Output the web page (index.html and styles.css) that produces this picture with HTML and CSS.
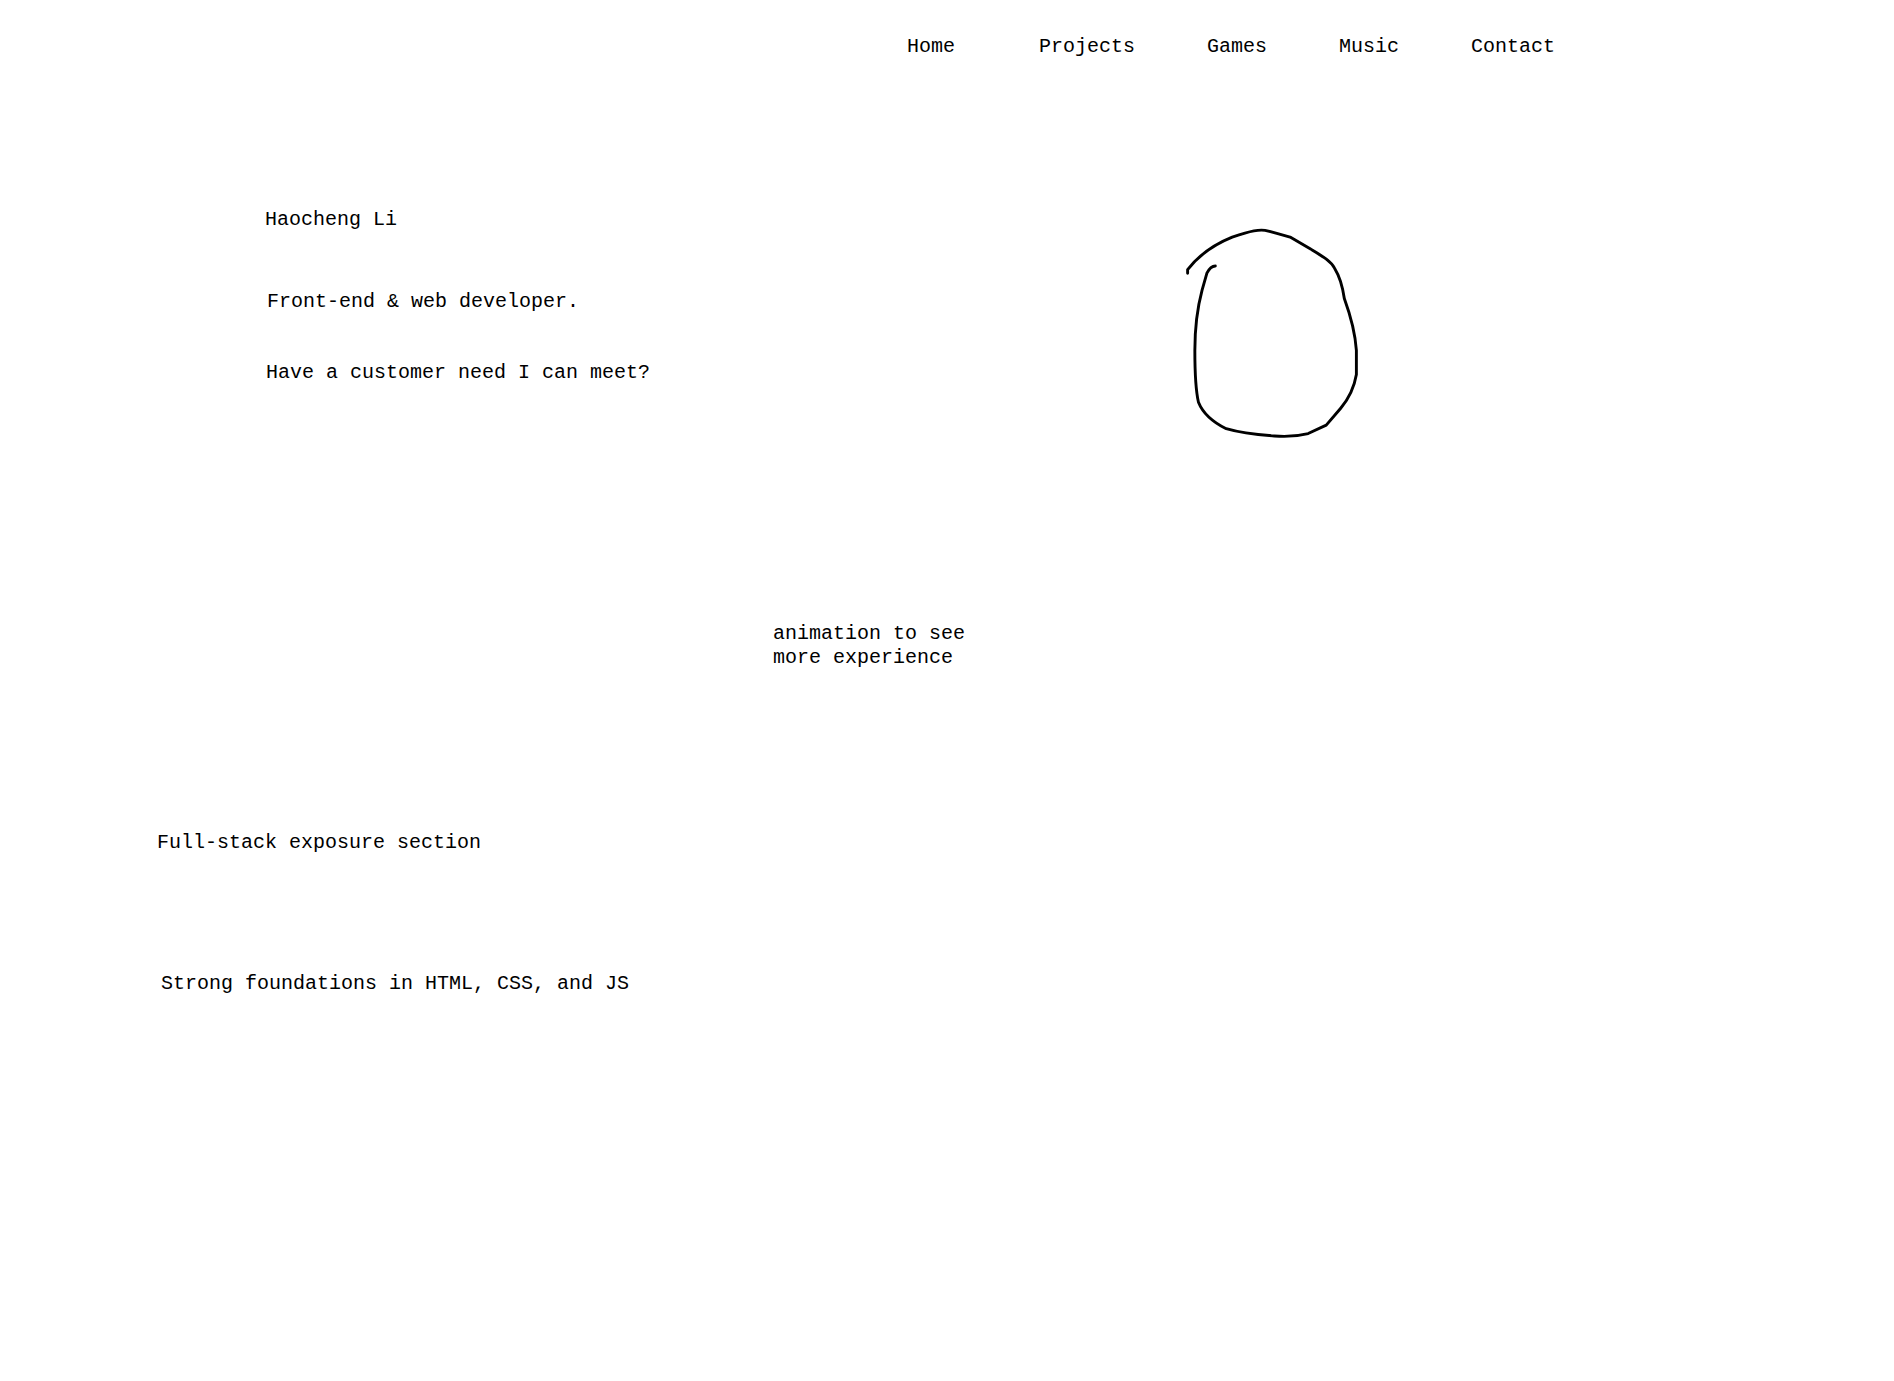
FILE: index.html
```html
<!DOCTYPE html>
<html lang="en">
<head>
<meta charset="utf-8">
<title>Haocheng Li</title>
<link rel="stylesheet" href="styles.css">
</head>
<body>
<header class="site-header">
  <nav class="nav">
    <a class="nav-link nav-home" href="#">Home</a>
    <a class="nav-link" href="#">Projects</a>
    <a class="nav-link" href="#">Games</a>
    <a class="nav-link" href="#">Music</a>
    <a class="nav-link" href="#">Contact</a>
  </nav>
</header>
<main>
  <section class="hero">
    <div class="hero-text">
      <p class="hero-name">Haocheng Li</p>
      <p class="hero-role">Front-end &amp; web developer.</p>
      <p class="hero-cta">Have a customer need I can meet?</p>
    </div>
    <svg class="sketch" viewBox="980 186 146 180" width="176" height="217" aria-hidden="true">
      <path d="M983,226 L983,223 C990,214 1000,204 1020,196 C1035,191 1043,189 1050,191 L1057,193 L1068,196 L1085,206 C1095,212 1102,216 1105,222 C1110,230 1112,240 1113,247 C1117,258 1122,275 1123,290 L1123,310 C1121,322 1115,332 1110,338 L1098,352 L1083,359 C1075,361 1068,362 1055,361 C1040,360 1025,358 1015,355 C1005,350 996,343 992,333 C989,320 989,305 989,290 C989,270 991,255 995,240 L999,226 C1001,222 1004,220 1006,220" fill="none" stroke="#000" stroke-width="2.4" stroke-linecap="round" stroke-linejoin="round"/>
    </svg>
  </section>
  <section class="teaser">
    <p>animation to see<br>more experience</p>
  </section>
  <section class="fullstack">
    <p class="fullstack-title">Full-stack exposure section</p>
    <p class="fullstack-body">Strong foundations in HTML, CSS, and JS</p>
  </section>
</main>
</body>
</html>
```
FILE: styles.css
```css
html, body {
  margin: 0;
  padding: 0;
  background: #fff;
}
body {
  font-family: "Liberation Mono", "DejaVu Sans Mono", monospace;
  font-size: 20px;
  line-height: 24px;
  color: #000;
}
p { margin: 0; }

.site-header {
  padding-top: 35px;
}
.nav {
  display: flex;
  padding-left: 907px;
  gap: 72px;
}
.nav-link {
  color: #000;
  text-decoration: none;
}
.nav-home {
  margin-right: 12px;
}

.hero {
  display: flex;
  align-items: flex-start;
  padding-top: 149px;
  padding-left: 265px;
}
.hero-text {
  width: 919px;
}
.hero-role {
  margin-top: 58px;
  padding-left: 2px;
}
.hero-cta {
  margin-top: 47px;
  padding-left: 1px;
}
.sketch {
  display: block;
  margin-top: 17px;
}

.teaser {
  padding-top: 180px;
  padding-left: 773px;
}

.fullstack {
  padding-top: 161px;
}
.fullstack-title {
  padding-left: 157px;
}
.fullstack-body {
  margin-top: 117px;
  padding-left: 161px;
}
```
